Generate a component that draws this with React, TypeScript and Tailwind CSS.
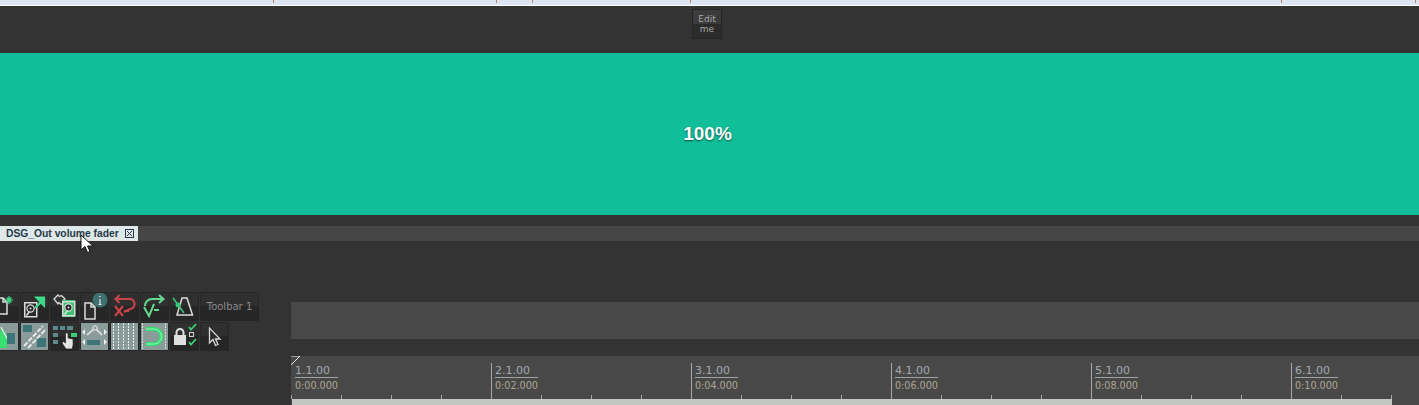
import type { ReactNode } from 'react'

const dejavu = "font-['DejaVu_Sans',sans-serif]"
const liberation = "font-['Liberation_Sans',Arial,sans-serif]"

function ToolButton({ active, w = 'w-[29px]', children }: { active?: boolean; w?: string; children: ReactNode }) {
  return (
    <div
      className={`relative h-[29px] shrink-0 overflow-hidden rounded-[1px] border border-[#262626] ${w} ${
        active ? 'bg-[#8a9c99]' : 'bg-gradient-to-b from-[#2f2f2f] from-50% to-[#262626] to-50%'
      }`}
    >
      {children}
    </div>
  )
}

function Icon({ children }: { children: ReactNode }) {
  return (
    <svg viewBox="0 0 29 29" className="absolute -left-px -top-px h-[29px] w-[29px]" fill="none">
      {children}
    </svg>
  )
}

function Page({ x, y }: { x: number; y: number }) {
  return (
    <path
      transform={`translate(${x} ${y})`}
      d="M1 1h6l4 4v12H1z M7 1v4h4"
      stroke="#dcdcdc"
      strokeWidth="1.5"
      fill="#2b2b2b"
    />
  )
}

function Disk({ x, y, fill = '#2b2b2b' }: { x: number; y: number; fill?: string }) {
  return (
    <g transform={`translate(${x} ${y})`}>
      <rect x="0.75" y="0.75" width="12" height="14" fill={fill} stroke="#dcdcdc" strokeWidth="1.5" />
      <circle cx="6.5" cy="6.5" r="3.6" fill="#2b2b2b" stroke="#dcdcdc" strokeWidth="1.2" />
      <circle cx="6.5" cy="6.5" r="1" fill="#dcdcdc" />
      <path d="M2.5 13.5l3-4" stroke="#dcdcdc" strokeWidth="1.5" />
    </g>
  )
}

function Toolbars() {
  return (
    <div className="flex flex-col gap-px -ml-[10px]">
      <div className="flex gap-px">
        <ToolButton>
          <Icon>
            <Page x={6} y={5} />
            <path d="M19 4v8M15 8h8M16.5 5.5l5 5M21.5 5.5l-5 5" stroke="#3fd98a" strokeWidth="1.2" />
          </Icon>
        </ToolButton>
        <ToolButton>
          <Icon>
            <Disk x={4} y={10} />
            <path d="M15 16l6-6M16.5 5.5h7.5v8z" stroke="#3fd98a" strokeWidth="2.2" fill="#3fd98a" />
          </Icon>
        </ToolButton>
        <ToolButton>
          <Icon>
            <path d="M4 7l4-4 1.5 1.5 2-1L15 7l-2 1.5 1 2-3 2-2-2-1 1.5z" stroke="#d8d8d8" strokeWidth="1.3" fill="#333" />
            <rect x="12" y="8" width="13" height="17" fill="#37c46f" />
            <Disk x={12} y={9} fill="#37c46f" />
          </Icon>
        </ToolButton>
        <ToolButton>
          <Icon>
            <circle cx="20" cy="8" r="7.5" fill="#3f6f73" />
            <path d="M19 4.5h1.5M20 7v5.5M18.5 12.5h3" stroke="#e4e4e4" strokeWidth="1.2" />
            <Page x={4} y={10} />
          </Icon>
        </ToolButton>
        <ToolButton>
          <Icon>
            <path d="M6 7h13a5 5 0 0 1 1 10l-6 3" stroke="#c8434a" strokeWidth="2.2" />
            <path d="M9.5 3L5.5 7l4 4" stroke="#c8434a" strokeWidth="2" />
            <path d="M5 14l8 10M13 14L5 24M14 19h5" stroke="#c8434a" strokeWidth="2.2" />
          </Icon>
        </ToolButton>
        <ToolButton>
          <Icon>
            <path d="M5 14a7 7 0 0 1 7-7h11" stroke="#66d990" strokeWidth="2" />
            <path d="M19 3l4.5 4-4.5 4" stroke="#66d990" strokeWidth="2" />
            <path d="M4 15l5 9 5-12M14 18h5" stroke="#66d990" strokeWidth="2" />
          </Icon>
        </ToolButton>
        <ToolButton>
          <Icon>
            <path d="M12 6h5l5.5 17H7z" stroke="#dcdcdc" strokeWidth="1.5" />
            <path d="M3 6l11 15" stroke="#38c878" strokeWidth="1.6" />
            <circle cx="8" cy="13" r="2.5" fill="#38c878" />
          </Icon>
        </ToolButton>
        <ToolButton w="w-[59px]">
          <span className={`flex h-full items-center justify-center text-[10px] text-[#8c8c8c] ${dejavu}`}>
            Toolbar 1
          </span>
        </ToolButton>
      </div>
      <div className="flex gap-px">
        <ToolButton active>
          <Icon>
            <path d="M11 5l6 9v12H9z" fill="#39e06f" />
            <path d="M11 5l9 17" stroke="#eee" strokeWidth="1.2" />
            <rect x="17" y="11" width="8" height="11" fill="#3d7478" />
          </Icon>
        </ToolButton>
        <ToolButton active>
          <Icon>
            <rect x="3" y="3" width="9" height="7" fill="#3d7478" />
            <rect x="17" y="16" width="9" height="9" fill="#3d7478" />
            <path d="M4 24L23 4M8 26L26 7" stroke="#e6e6e6" strokeWidth="2" strokeDasharray="5 1.5" />
          </Icon>
        </ToolButton>
        <ToolButton>
          <Icon>
            <path d="M3 4h5v4H3zM10 4h5v4h-5zM17 4h6v4h-6zM3 11h5v4H3zM3 18h5v4H3z" fill="#5b8a8c" />
            <rect x="21" y="11" width="6" height="4" fill="#38d070" />
            <path d="M16 27l-4-6 1.5-1.5 2 1.5V12a1.3 1.3 0 0 1 2.6 0v4l5 1v6l-1 4z" fill="#e4e4e4" stroke="#222" strokeWidth="0.7" />
          </Icon>
        </ToolButton>
        <ToolButton active>
          <Icon>
            <path d="M7 13l8-7 7 7" stroke="#eee" strokeWidth="1.3" />
            <circle cx="15" cy="6" r="2.2" fill="#8a9c99" stroke="#eee" />
            <rect x="7" y="18" width="13" height="5" fill="#3d7478" />
            <path d="M2 10l3-3v6zM27 10l-3-3v6zM2 20l3-3v6zM27 20l-3-3v6z" fill="#eee" />
          </Icon>
        </ToolButton>
        <ToolButton active>
          <Icon>
            <path d="M3.5 1v27M8.5 1v27M13.5 1v27M18.5 1v27M23.5 1v27" stroke="#eee" strokeWidth="1" strokeDasharray="2 1" />
          </Icon>
        </ToolButton>
        <ToolButton active>
          <Icon>
            <path d="M2.5 1v27M25.5 1v27" stroke="#cfe0da" strokeWidth="1" strokeDasharray="2 1" />
            <path d="M6 7h8a7.5 7.5 0 0 1 0 15H6" stroke="#2fe06f" strokeWidth="4" />
            <path d="M6 7h8a7.5 7.5 0 0 1 0 15H6" stroke="#a5efbf" strokeWidth="1" />
          </Icon>
        </ToolButton>
        <ToolButton>
          <Icon>
            <rect x="4" y="13" width="12" height="10" fill="#e0e0e0" />
            <path d="M6.5 13v-2.5a3.5 3.5 0 0 1 7 0V13" stroke="#e0e0e0" strokeWidth="2" />
            <path d="M19 5l2 2.5L26 2M19 20l2 2.5 5-5.5" stroke="#38d070" strokeWidth="1.8" />
            <rect x="19.5" y="10.5" width="4" height="4" stroke="#cfcfcf" />
          </Icon>
        </ToolButton>
        <ToolButton>
          <Icon>
            <path d="M9.5 6v15l3.5-3.5 2.5 6 2.5-1-2.5-5.5H20z" fill="#2a2a2a" stroke="#d8d8d8" strokeWidth="1.3" />
          </Icon>
        </ToolButton>
      </div>
    </div>
  )
}

const marks = [
  ['1.1.00', '0:00.000'],
  ['2.1.00', '0:02.000'],
  ['3.1.00', '0:04.000'],
  ['4.1.00', '0:06.000'],
  ['5.1.00', '0:08.000'],
  ['6.1.00', '0:10.000'],
]

function Ruler() {
  return (
    <div className="relative mt-[17px] flex h-[49px] flex-col bg-[#484848]">
      <div className="flex flex-1 overflow-hidden">
        {marks.map(([bar, time], i) => (
          <div key={bar} className="flex w-[200px] shrink-0 flex-col">
            <div className={`mt-[7px] flex flex-1 flex-col pl-1 ${dejavu} ${i === 0 ? '' : 'border-l border-[#a8a8a8] pl-[3px]'}`}>
              <span className="h-[15px] w-[43px] border-b border-[#a0a0a0] text-[11px] leading-[15px] text-[#a0a8b0]">{bar}</span>
              <span className="mt-[2px] text-[9.6px] leading-[11px] text-[#aca595] whitespace-nowrap">{time}</span>
            </div>
            <div className="flex h-[4px]">
              {[0, 1, 2, 3].map((t) => (
                <div key={t} className="flex w-[50px]">
                  <div className="w-px bg-[#a8a8a8]" />
                </div>
              ))}
            </div>
          </div>
        ))}
      </div>
      <div className="mr-[27px] ml-px h-[6px] bg-[#c4c6c4]" />
      {/* loop marker corner */}
      <svg viewBox="0 0 10 10" className="absolute left-0 top-0 h-[10px] w-[10px]" fill="none">
        <path d="M0 9L9 0H0" stroke="#f0f0f0" />
      </svg>
    </div>
  )
}

export default function App() {
  return (
    <div className={`relative flex h-[405px] w-[1419px] flex-col overflow-hidden bg-[#333333] ${liberation}`}>
      <div className="relative h-[5px] bg-[#dfe4f4]">
        {/* stray marks along the cut-off row above */}
        {[273, 496, 532, 690, 1281, 1415].map((x) => (
          <div key={x} className="absolute top-0 h-[3px] w-px bg-[#b08a5a]" style={{ left: x }} />
        ))}
      </div>
      <div className="h-px bg-white" />

      <div className="flex h-[47px] items-start justify-center pr-[5px] pt-[3px]">
        <div
          className={`flex h-[30px] w-[30px] items-center justify-center border border-[#252525] bg-gradient-to-b from-[#3b3b3b] from-50% to-[#2b2b2b] to-50% text-center text-[9px] leading-[10px] text-[#a8a8a8] ${dejavu}`}
        >
          Edit
          <br />
          me
        </div>
      </div>

      <div className="flex h-[162px] items-center justify-center bg-[#10bf99] pr-[4px]">
        <span className="text-[19px] font-bold text-white [text-shadow:0_1px_2px_rgba(0,0,0,0.6)]">100%</span>
      </div>

      <div className="mt-[11px] h-[15px] bg-[#464646]">
        <div className="flex h-full w-[138px] items-center bg-[#dfe8e8] pl-[6px]">
          <span className="w-[119px] pt-px text-[10.3px] font-bold leading-none text-[#26394a] whitespace-nowrap">DSG_Out volume fader</span>
          <span className="flex h-[9px] w-[9px] items-center justify-center border border-[#26394a]">
            <svg viewBox="0 0 7 7" className="h-[7px] w-[7px]" stroke="#26394a">
              <path d="M1 1l5 5M6 1l-5 5" />
            </svg>
          </span>
        </div>
      </div>

      <div className="flex flex-1 pt-[61px]">
        <div className="-mt-[10px] w-[291px] shrink-0">
          <Toolbars />
        </div>
        <div className="min-w-0 flex-1">
          <div className="h-[37px] bg-[#484848]" />
          <Ruler />
        </div>
      </div>

      {/* mouse cursor over the tab */}
      <svg viewBox="0 0 14 20" className="absolute left-[80px] top-[234px] h-[20px] w-[14px]">
        <path d="M1 1v15l4-3.5 2.5 6 2.5-1-2.5-5.5H13z" fill="#fff" stroke="#111" strokeWidth="1" />
      </svg>
    </div>
  )
}
